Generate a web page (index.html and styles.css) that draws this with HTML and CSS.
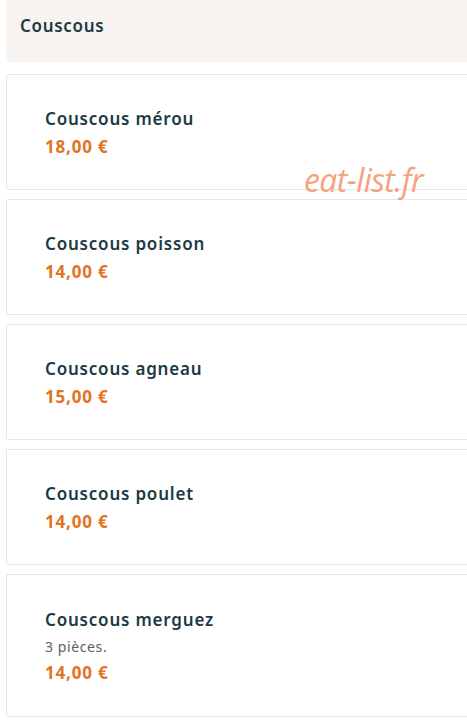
FILE: index.html
```html
<!DOCTYPE html>
<html lang="fr">
<head>
    <meta charset="UTF-8">
    <meta name="viewport" content="width=device-width, initial-scale=1.0">
    <title>Couscous</title>
    <link rel="stylesheet" href="styles.css">
</head>
<body>
    <div class="menu">
        <div class="category">Couscous</div>

        <div class="dish">
            <h3>Couscous mérou</h3>
            <p class="price">18,00 €</p>
        </div>
        <div class="dish">
            <h3>Couscous poisson</h3>
            <p class="price">14,00 €</p>
        </div>
        <div class="dish">
            <h3>Couscous agneau</h3>
            <p class="price">15,00 €</p>
        </div>
        <div class="dish">
            <h3>Couscous poulet</h3>
            <p class="price">14,00 €</p>
        </div>
        <div class="dish">
            <h3>Couscous merguez</h3>
            <p class="desc">3 pièces.</p>
            <p class="price">14,00 €</p>
        </div>

        <span class="watermark">eat-list.fr</span>
    </div>
</body>
</html>
```

FILE: styles.css
```css
* {
    margin: 0;
    padding: 0;
    box-sizing: border-box;
}

body {
    background: #ffffff;
    font-family: "Noto Sans", Arial, sans-serif;
    color: #1b3a44;
}

.menu {
    position: relative;
    padding-left: 6px;
    width: 475px;
}

.category {
    height: 62px;
    background: #f8f4f1;
    padding: 14px 14px;
    font-size: 17px;
    font-weight: 600;
    letter-spacing: 0.7px;
}

.dish {
    margin-top: 12px;
    height: 116px;
    border: 1px solid #e6e6e6;
    border-radius: 2px;
    padding: 30px 38px;
    display: flex;
    flex-direction: column;
    justify-content: center;
}

.dish + .dish {
    margin-top: 9px;
}

.dish:last-of-type {
    height: 143px;
}

.dish h3 {
    font-size: 17px;
    font-weight: 600;
    line-height: 26px;
    letter-spacing: 0.8px;
}

.price {
    margin-top: 3px;
    font-size: 17px;
    font-weight: 700;
    color: #e37320;
    line-height: 24px;
    letter-spacing: 0.8px;
}

.desc {
    margin-top: 3px;
    font-size: 14px;
    color: #5e5e5e;
    line-height: 22px;
    letter-spacing: 0.6px;
}

.watermark {
    position: absolute;
    left: 304px;
    top: 158px;
    font-family: "Open Sans", sans-serif;
    font-style: italic;
    font-size: 32px;
    color: #f5a37c;
    letter-spacing: -0.6px;
}
```
